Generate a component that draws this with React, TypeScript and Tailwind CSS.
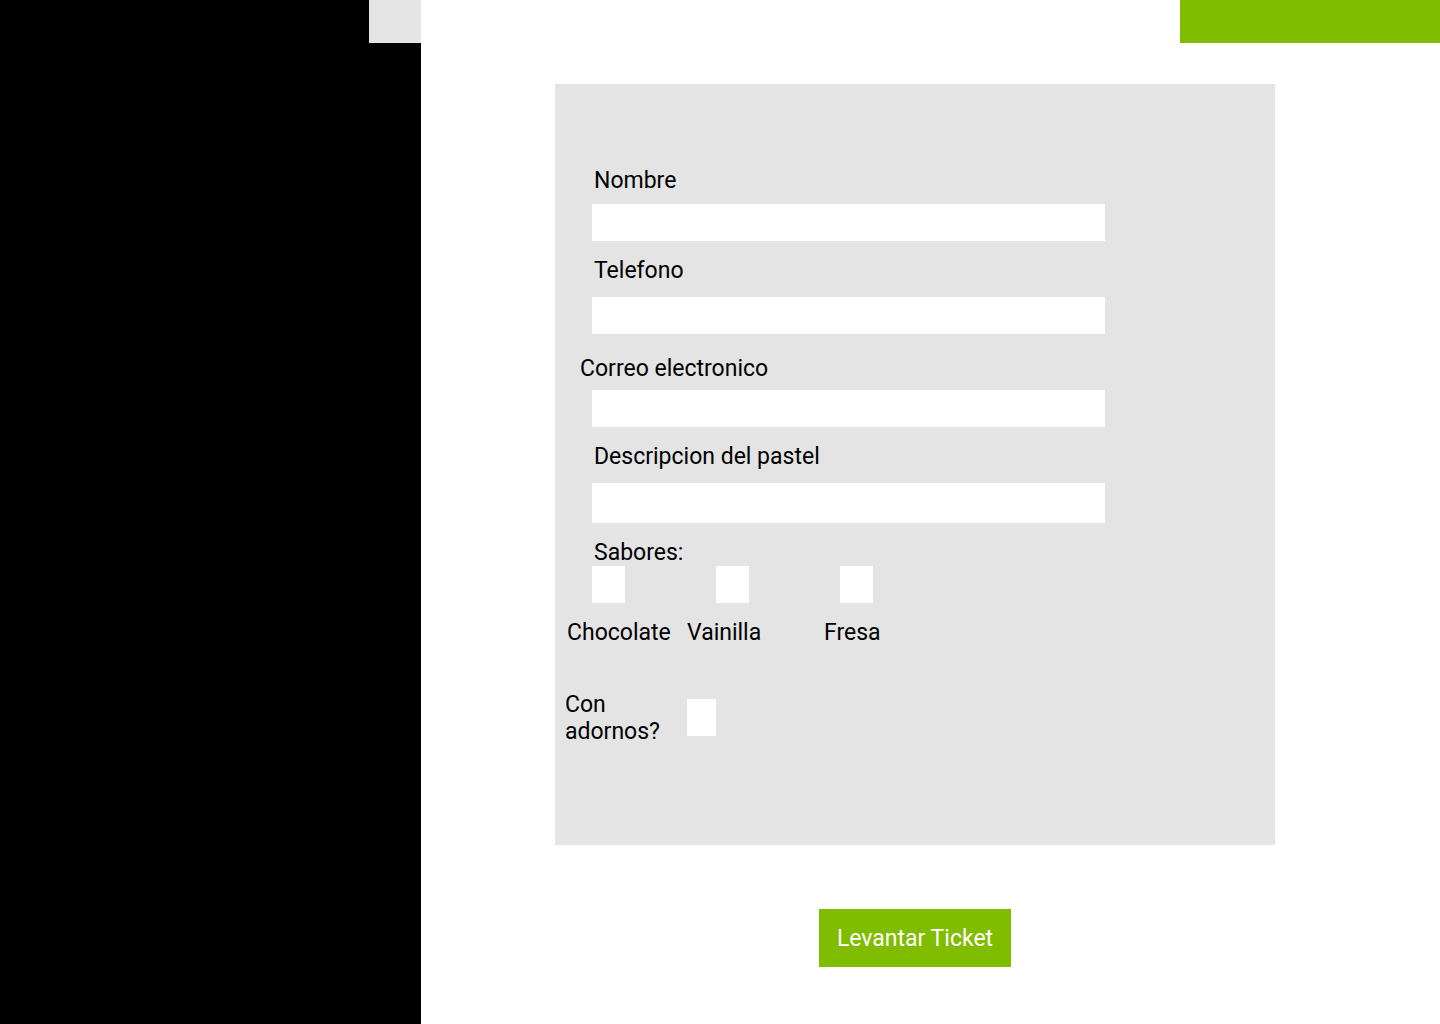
export default function App() {
  const label = 'block text-[23px] leading-[27px] text-black'
  const field = 'block w-[513px] bg-white ml-[37px] outline-none'
  const box = 'appearance-none block bg-white'
  return (
    <div className="flex min-h-screen w-full bg-white" style={{ fontFamily: 'Roboto, "Liberation Sans", sans-serif' }}>
      <aside className="w-[421px] shrink-0 bg-black min-h-screen">
        <div className="ml-auto h-[43px] w-[52px] bg-[#e4e4e4]"></div>
      </aside>
      <main className="flex-1">
        <div className="flex justify-end">
          <div className="h-[43px] w-[260px] bg-[#80bc00]"></div>
        </div>
        <div className="ml-[134px] w-[720px]">
          <form className="mt-[41px] h-[761px] bg-[#e4e4e4] pt-[83px]">
            <label className={`${label} ml-[39px]`}>Nombre</label>
            <input className={`${field} mt-[10px] h-[37px]`} />
            <label className={`${label} ml-[39px] mt-[16px]`}>Telefono</label>
            <input className={`${field} mt-[13px] h-[37px]`} />
            <label className={`${label} ml-[25px] mt-[21px]`}>Correo electronico</label>
            <input className={`${field} mt-[8px] h-[37px]`} />
            <label className={`${label} ml-[39px] mt-[16px]`}>Descripcion del pastel</label>
            <input className={`${field} mt-[13px] h-[40px]`} />
            <label className={`${label} ml-[39px] mt-[16px]`}>Sabores:</label>
            <div className="flex ml-[37px] gap-[91px]">
              <input type="checkbox" className={`${box} w-[33px] h-[37px]`} />
              <input type="checkbox" className={`${box} w-[33px] h-[37px]`} />
              <input type="checkbox" className={`${box} w-[33px] h-[37px]`} />
            </div>
            <div className="flex ml-[12px] mt-[16px] text-[23px] leading-[27px] text-black">
              <span className="w-[120px]">Chocolate</span>
              <span className="w-[137px]">Vainilla</span>
              <span>Fresa</span>
            </div>
            <div className="flex items-center ml-[10px] mt-[45px]">
              <span className="w-[122px] text-[23px] leading-[27px] text-black">Con adornos?</span>
              <input type="checkbox" className={`${box} w-[29px] h-[37px] -mt-[1px]`} />
            </div>
          </form>
          <div className="flex justify-center mt-[64px]">
            <button className="h-[58px] w-[192px] bg-[#80bc00] text-white text-[23px] leading-[27px]">
              Levantar Ticket
            </button>
          </div>
        </div>
      </main>
    </div>
  )
}
